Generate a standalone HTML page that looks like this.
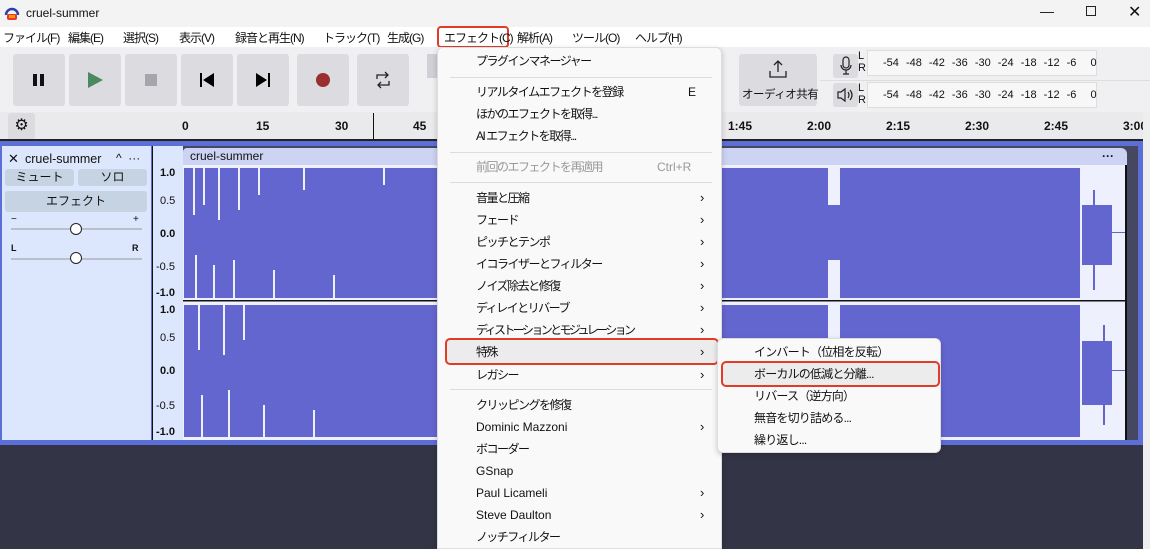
<!DOCTYPE html>
<html><head><meta charset="utf-8"><style>
*{margin:0;padding:0;box-sizing:border-box}
body{width:1150px;height:549px;overflow:hidden;position:relative;background:#333546;font-family:"Liberation Sans","Noto Sans CJK JP",sans-serif;font-size:12px;color:#111}
.a{position:absolute}
.btn{position:absolute;top:54px;width:52px;height:52px;background:#dcdce0;border-radius:3px}
.mi{position:absolute;left:38px;font-size:12px;white-space:nowrap;line-height:14px;letter-spacing:-1.5px}
.mi.l{letter-spacing:0}
.ar{position:absolute;left:262px;font-size:13px;line-height:14px}
.sep{position:absolute;left:12px;width:262px;height:1px;background:#ddd}
.rl{position:absolute;top:119px;font-weight:bold;font-size:12px}
.mb{position:absolute;top:31px;font-size:12px;white-space:nowrap;line-height:14px;letter-spacing:-1px}
</style></head><body>
<div class="a" style="left:0;top:0;width:1150px;height:27px;background:#f3f3f3"></div>
<svg class="a" style="left:4px;top:5px" width="16" height="16"><path d="M2 10a6 6 0 0 1 12 0" stroke="#2a3fb0" stroke-width="2.5" fill="none"/><rect x="3" y="9" width="10" height="6" rx="2" fill="#e33"/><rect x="5" y="10" width="6" height="3" fill="#f90"/></svg>
<div class="a" style="left:26px;top:6px;font-size:12px">cruel-summer</div>
<div class="a" style="left:1040px;top:3px;font-size:14px">—</div>
<div class="a" style="left:1086px;top:6px;width:10px;height:10px;border:1px solid #222"></div>
<div class="a" style="left:1128px;top:2px;font-size:16px">✕</div>
<div class="a" style="left:0;top:27px;width:1150px;height:20px;background:#fff"></div>
<div class="mb" style="left:3px">ファイル(F)</div>
<div class="mb" style="left:68px">編集(E)</div>
<div class="mb" style="left:123px">選択(S)</div>
<div class="mb" style="left:179px">表示(V)</div>
<div class="mb" style="left:235px">録音と再生(N)</div>
<div class="mb" style="left:323px">トラック(T)</div>
<div class="mb" style="left:387px">生成(G)</div>
<div class="a" style="left:437px;top:26px;width:72px;height:22px;border:2px solid #e03c28;border-radius:4px"></div>
<div class="mb" style="left:444px">エフェクト(C)</div>
<div class="mb" style="left:517px">解析(A)</div>
<div class="mb" style="left:572px">ツール(O)</div>
<div class="mb" style="left:635px">ヘルプ(H)</div>
<div class="a" style="left:0;top:47px;width:1150px;height:65px;background:#f0f0f2"></div>
<div class="btn" style="left:13px"></div><div class="btn" style="left:69px"></div><div class="btn" style="left:125px"></div><div class="btn" style="left:181px"></div><div class="btn" style="left:237px"></div><div class="btn" style="left:297px"></div><div class="btn" style="left:357px"></div>
<div class="a" style="left:33px;top:74px;width:4px;height:12px;background:#111"></div><div class="a" style="left:40px;top:74px;width:4px;height:12px;background:#111"></div>
<svg class="a" style="left:88px;top:72px" width="16" height="16"><path d="M0 0L15 8L0 16Z" fill="#4a8a63"/></svg>
<div class="a" style="left:145px;top:74px;width:12px;height:12px;background:#a5a6ab"></div>
<svg class="a" style="left:200px;top:73px" width="14" height="14"><rect x="0" y="0" width="2" height="14"/><path d="M14 0L3 7L14 14Z"/></svg>
<svg class="a" style="left:256px;top:73px" width="14" height="14"><rect x="12" y="0" width="2" height="14"/><path d="M0 0L11 7L0 14Z"/></svg>
<div class="a" style="left:316px;top:73px;width:14px;height:14px;border-radius:50%;background:#9a2f2f"></div>
<svg class="a" style="left:374px;top:71px" width="18" height="18" fill="none" stroke="#222" stroke-width="1.3"><path d="M3 8V4h11M11 1l3 3-3 3M15 10v4H4M7 11l-3 3 3 3"/></svg>
<div class="a" style="left:427px;top:54px;width:10px;height:24px;background:#d0d0d6"></div>
<div class="a" style="left:739px;top:54px;width:78px;height:52px;background:#dcdce0;border-radius:3px"></div>
<svg class="a" style="left:768px;top:59px" width="20" height="20" fill="none" stroke="#222" stroke-width="1.3"><path d="M10 2v11M6 6l4-4 4 4M2 12v6h16v-6"/></svg>
<div class="a" style="left:742px;top:86px;font-size:11.5px;letter-spacing:-0.5px">オーディオ共有</div>
<div class="a" style="left:833px;top:54px;width:25px;height:24px;background:#dcdce0;border-radius:3px"></div>
<div class="a" style="left:833px;top:83px;width:25px;height:24px;background:#dcdce0;border-radius:3px"></div>
<svg class="a" style="left:838px;top:56px" width="16" height="20" fill="none" stroke="#222" stroke-width="1.2"><rect x="5" y="1" width="6" height="11" rx="3"/><path d="M3 9a5 5 0 0 0 10 0M8 14v4M5 18h6"/></svg>
<svg class="a" style="left:837px;top:87px" width="18" height="16" fill="none" stroke="#222" stroke-width="1.2"><path d="M1 5h3l4-3v12l-4-3H1z M11 5q2 3 0 6 M13 3q4 5 0 10"/></svg>
<div class="a" style="left:858px;top:50px;font-size:11px;line-height:12px">L<br>R</div>
<div class="a" style="left:858px;top:82px;font-size:11px;line-height:12px">L<br>R</div>
<div class="a" style="left:867px;top:50px;width:230px;height:26px;background:#f7f7f7;border:1px solid #ddd"></div>
<div class="a" style="left:867px;top:82px;width:230px;height:26px;background:#f7f7f7;border:1px solid #ddd"></div>
<div class="a" style="left:883px;top:57px;font-size:11px;word-spacing:4px;white-space:nowrap">-54 -48 -42 -36 -30 -24 -18 -12 -6 &nbsp;0</div>
<div class="a" style="left:883px;top:89px;font-size:11px;word-spacing:4px;white-space:nowrap">-54 -48 -42 -36 -30 -24 -18 -12 -6 &nbsp;0</div>
<div class="a" style="left:820px;top:80px;width:330px;height:1px;background:#ddd"></div>
<div class="a" style="left:0;top:112px;width:1150px;height:29px;background:#eaeaec"></div>
<div class="a" style="left:8px;top:113px;width:27px;height:27px;background:#dcdce0;border-radius:3px;text-align:center;font-size:16px;line-height:26px">⚙</div>
<div class="rl" style="left:182px">0</div><div class="rl" style="left:256px">15</div><div class="rl" style="left:335px">30</div><div class="rl" style="left:413px">45</div>
<div class="rl" style="left:728px">1:45</div><div class="rl" style="left:807px">2:00</div><div class="rl" style="left:886px">2:15</div><div class="rl" style="left:965px">2:30</div><div class="rl" style="left:1044px">2:45</div><div class="rl" style="left:1123px">3:00</div>
<div class="a" style="left:373px;top:113px;width:1px;height:328px;background:#111"></div>
<div class="a" style="left:0;top:139px;width:1143px;height:2px;background:#222"></div>
<div class="a" style="left:0;top:141px;width:1143px;height:304px;background:#5b6fd6"></div>
<div class="a" style="left:1143px;top:112px;width:7px;height:437px;background:#eeeeee"></div>
<div class="a" style="left:2px;top:146px;width:149px;height:294px;background:#dce6fc"></div>
<div class="a" style="left:8px;top:151px;font-size:13px">✕</div>
<div class="a" style="left:25px;top:152px;font-size:12.5px">cruel-summer</div>
<div class="a" style="left:116px;top:151px;font-size:12px">^&nbsp; ···</div>
<div class="a" style="left:5px;top:169px;width:69px;height:17px;background:#c6d3e3;border-radius:3px;text-align:center;line-height:17px">ミュート</div>
<div class="a" style="left:78px;top:169px;width:69px;height:17px;background:#c6d3e3;border-radius:3px;text-align:center;line-height:17px">ソロ</div>
<div class="a" style="left:5px;top:191px;width:142px;height:21px;background:#c6d3e3;border-radius:3px;text-align:center;line-height:21px">エフェクト</div>
<div class="a" style="left:11px;top:214px;font-size:10px">−</div><div class="a" style="left:133px;top:214px;font-size:10px">+</div>
<div class="a" style="left:11px;top:228px;width:131px;height:2px;background:#b8c0cc"></div>
<div class="a" style="left:70px;top:223px;width:12px;height:12px;border-radius:50%;background:#fff;border:1.3px solid #222"></div>
<div class="a" style="left:11px;top:243px;font-size:9px;font-weight:bold">L</div><div class="a" style="left:132px;top:243px;font-size:9px;font-weight:bold">R</div>
<div class="a" style="left:11px;top:258px;width:131px;height:2px;background:#b8c0cc"></div>
<div class="a" style="left:70px;top:252px;width:12px;height:12px;border-radius:50%;background:#fff;border:1.3px solid #222"></div>
<div class="a" style="left:152px;top:146px;width:31px;height:294px;background:#dce6fc;border-left:1px solid #111"></div>
<div class="a" style="left:160px;top:166px;font-size:11px;font-weight:bold;line-height:14px">1.0</div>
<div class="a" style="left:160px;top:194px;font-size:11px;line-height:14px">0.5</div>
<div class="a" style="left:160px;top:227px;font-size:11px;font-weight:bold;line-height:14px">0.0</div>
<div class="a" style="left:156px;top:260px;font-size:11px;line-height:14px">-0.5</div>
<div class="a" style="left:156px;top:286px;font-size:11px;font-weight:bold;line-height:14px">-1.0</div>
<div class="a" style="left:160px;top:303px;font-size:11px;font-weight:bold;line-height:14px">1.0</div>
<div class="a" style="left:160px;top:331px;font-size:11px;line-height:14px">0.5</div>
<div class="a" style="left:160px;top:364px;font-size:11px;font-weight:bold;line-height:14px">0.0</div>
<div class="a" style="left:156px;top:399px;font-size:11px;line-height:14px">-0.5</div>
<div class="a" style="left:156px;top:425px;font-size:11px;font-weight:bold;line-height:14px">-1.0</div>
<div class="a" style="left:183px;top:146px;width:955px;height:294px;background:#454860"></div>
<div class="a" style="left:183px;top:148px;width:944px;height:17px;background:#cdd3f2;border-radius:4px 6px 0 0"></div>
<div class="a" style="left:190px;top:149px;font-size:12px">cruel-summer</div>
<div class="a" style="left:1102px;top:149px;font-size:12px;font-weight:bold">···</div>
<svg class="a" style="left:183px;top:165px" width="944" height="275">
<rect width="944" height="275" fill="#eef0fd"/>
<g fill="#6466d0">
<rect x="1" y="3" width="896" height="130"/><rect x="1" y="140" width="896" height="132"/>
<rect x="899" y="40" width="30" height="60"/><rect x="899" y="176" width="30" height="64"/>
<rect x="929" y="67" width="15" height="1"/><rect x="929" y="205" width="15" height="1"/>
<rect x="910" y="25" width="2" height="100"/><rect x="920" y="160" width="2" height="100"/>
</g>
<g fill="#eef0fd">
<rect x="645" y="0" width="12" height="40"/><rect x="645" y="95" width="12" height="45"/><rect x="645" y="135" width="12" height="45"/><rect x="645" y="232" width="12" height="43"/>
<rect x="10" y="0" width="2" height="50"/><rect x="20" y="0" width="2" height="40"/><rect x="35" y="0" width="2" height="55"/><rect x="55" y="0" width="2" height="45"/><rect x="75" y="0" width="2" height="30"/><rect x="120" y="0" width="2" height="25"/><rect x="200" y="0" width="2" height="20"/>
<rect x="12" y="90" width="2" height="45"/><rect x="30" y="100" width="2" height="40"/><rect x="50" y="95" width="2" height="40"/><rect x="90" y="105" width="2" height="30"/><rect x="150" y="110" width="2" height="25"/>
<rect x="15" y="140" width="2" height="45"/><rect x="40" y="140" width="2" height="50"/><rect x="60" y="140" width="2" height="35"/>
<rect x="18" y="230" width="2" height="45"/><rect x="45" y="225" width="2" height="50"/><rect x="80" y="240" width="2" height="35"/><rect x="130" y="245" width="2" height="30"/>
</g>
<rect x="0" y="135" width="944" height="1.5" fill="#111"/>
<rect x="942" y="0" width="2" height="275" fill="#111"/>
</svg>
<div class="a" style="left:0;top:445px;width:1143px;height:104px;background:#333546"></div>
<div class="a" style="left:437px;top:47px;width:285px;height:502px;background:#f9f9f9;border:1px solid #ddd;border-radius:6px 6px 0 0;box-shadow:0 2px 6px rgba(0,0,0,.2)">
<div class="mi" style="top:6px">プラグインマネージャー</div>
<div class="sep" style="top:29px"></div>
<div class="mi" style="top:37px">リアルタイムエフェクトを登録</div><div class="a" style="left:250px;top:37px;line-height:14px">E</div>
<div class="mi" style="top:59px">ほかのエフェクトを取得...</div>
<div class="mi" style="top:81px">AI エフェクトを取得...</div>
<div class="sep" style="top:104px"></div>
<div class="mi" style="top:112px;color:#999">前回のエフェクトを再適用</div><div class="a" style="left:219px;top:112px;color:#999;line-height:14px">Ctrl+R</div>
<div class="sep" style="top:134px"></div>
<div class="mi" style="top:143px">音量と圧縮</div><div class="ar" style="top:143px">›</div>
<div class="mi" style="top:165px">フェード</div><div class="ar" style="top:165px">›</div>
<div class="mi" style="top:187px">ピッチとテンポ</div><div class="ar" style="top:187px">›</div>
<div class="mi" style="top:209px">イコライザーとフィルター</div><div class="ar" style="top:209px">›</div>
<div class="mi" style="top:231px">ノイズ除去と修復</div><div class="ar" style="top:231px">›</div>
<div class="mi" style="top:253px">ディレイとリバーブ</div><div class="ar" style="top:253px">›</div>
<div class="mi" style="top:275px;letter-spacing:-2.6px">ディストーションとモジュレーション</div><div class="ar" style="top:275px">›</div>
<div class="a" style="left:7px;top:290px;width:274px;height:27px;background:#ececec;border:2.5px solid #e03c28;border-radius:5px"></div>
<div class="mi" style="top:297px">特殊</div><div class="ar" style="top:297px">›</div>
<div class="mi" style="top:320px">レガシー</div><div class="ar" style="top:320px">›</div>
<div class="sep" style="top:341px"></div>
<div class="mi" style="top:350px">クリッピングを修復</div>
<div class="mi l" style="top:372px">Dominic Mazzoni</div><div class="ar" style="top:372px">›</div>
<div class="mi" style="top:394px">ボコーダー</div>
<div class="mi l" style="top:416px">GSnap</div>
<div class="mi l" style="top:438px">Paul Licameli</div><div class="ar" style="top:438px">›</div>
<div class="mi l" style="top:460px">Steve Daulton</div><div class="ar" style="top:460px">›</div>
<div class="mi" style="top:482px">ノッチフィルター</div>
</div>
<div class="a" style="left:717px;top:338px;width:224px;height:115px;background:#f9f9f9;border:1px solid #ddd;border-radius:6px;box-shadow:0 2px 6px rgba(0,0,0,.2)">
<div class="a" style="left:3px;top:22px;width:219px;height:26px;background:#ececec;border:2.5px solid #e03c28;border-radius:5px"></div>
<div class="mi" style="left:36px;top:6px;letter-spacing:-0.8px">インバート（位相を反転）</div>
<div class="mi" style="left:36px;top:28px;letter-spacing:-0.8px">ボーカルの低減と分離...</div>
<div class="mi" style="left:36px;top:50px;letter-spacing:-0.8px">リバース（逆方向）</div>
<div class="mi" style="left:36px;top:72px;letter-spacing:-0.8px">無音を切り詰める...</div>
<div class="mi" style="left:36px;top:94px;letter-spacing:-0.8px">繰り返し...</div>
</div>
</body></html>
